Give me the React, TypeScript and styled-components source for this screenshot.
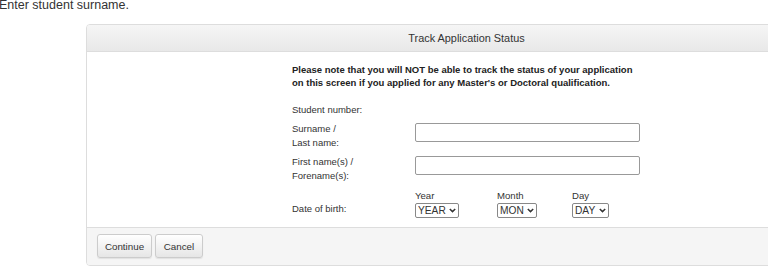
import React from "react";
import styled, { createGlobalStyle } from "styled-components";

const Global = createGlobalStyle`
  html, body { margin: 0; padding: 0; background: #fff; overflow: hidden; }
  body { font-family: "Liberation Sans", Arial, sans-serif; font-size: 9.4px; color: #333; }
`;

const Page = styled.div`
  width: 768px;
  height: 268px;
  overflow: hidden;
`;

const Hint = styled.div`
  margin: -2px 0 0 -1px;
  line-height: 14px;
  font-size: 12.5px;
  color: #333;
`;

const Panel = styled.div`
  margin: 12px 0 0 86px;
  width: 759px;
  border: 1px solid #ddd;
  border-radius: 4px;
  background: #fff;
  overflow: hidden;
`;

const Header = styled.div`
  height: 26px;
  display: flex;
  align-items: center;
  justify-content: center;
  background: linear-gradient(#f5f5f5, #e8e8e8);
  border-bottom: 1px solid #ddd;
  color: #333;
  font-size: 10.9px;
`;

const Body = styled.div`
  height: 175px;
  padding: 11px 0 0 205px;
  box-sizing: border-box;
`;

const Note = styled.p`
  margin: 0 0 14px;
  font-weight: bold;
  font-size: 9.5px;
  line-height: 13px;
  color: #222;
`;

const Row = styled.div<{ $mt?: number; $align?: string }>`
  display: grid;
  grid-template-columns: 123px auto;
  align-items: ${(p) => p.$align || "start"};
  margin-top: ${(p) => p.$mt ?? 0}px;
`;

const Label = styled.div<{ $mb?: number }>`
  line-height: 14px;
  font-size: 9.5px;
  color: #333;
  margin-bottom: ${(p) => p.$mb ?? 0}px;
`;

const TextInput = styled.input`
  box-sizing: border-box;
  width: 225px;
  height: 19px;
  margin-top: 1px;
  border: 1px solid #999;
  border-radius: 2px;
  padding: 0 4px;
  font: inherit;
`;

const DateGroups = styled.div`
  display: flex;
`;

const DateGroup = styled.div<{ $w: number }>`
  width: ${(p) => p.$w}px;
  display: flex;
  flex-direction: column;
  align-items: flex-start;
`;

const SmallLabel = styled.div`
  line-height: 14px;
  font-size: 9.6px;
  color: #333;
`;

const SelectBox = styled.div`
  box-sizing: border-box;
  height: 15px;
  display: flex;
  align-items: center;
  border: 1px solid #888;
  border-radius: 2px;
  padding: 0 2px 0 2px;
  gap: 3px;
  background: #fff;
`;

const Select = styled.select`
  appearance: none;
  border: none;
  background: transparent;
  padding: 0;
  margin: 0;
  font-family: "Liberation Sans", Arial, sans-serif;
  font-size: 10.2px;
  color: #333;
  line-height: 13px;
  outline: none;
`;

const Footer = styled.div`
  height: 38px;
  box-sizing: border-box;
  background: #f5f5f5;
  border-top: 1px solid #ddd;
  display: flex;
  align-items: flex-start;
  gap: 3px;
  padding: 6px 0 0 10px;
`;

const Button = styled.button<{ $w: number }>`
  box-sizing: border-box;
  width: ${(p) => p.$w}px;
  height: 24px;
  border: 1px solid #ccc;
  border-radius: 3px;
  background: linear-gradient(#fff, #e6e6e6);
  box-shadow: 0 1px 1px rgba(0, 0, 0, 0.08);
  font-family: "Liberation Sans", Arial, sans-serif;
  font-size: 9.8px;
  color: #333;
  padding: 0;
`;

const Chevron = () => (
  <svg width="7" height="5" viewBox="0 0 7 5">
    <path d="M0.8 1 L3.5 3.6 L6.2 1" fill="none" stroke="#333" strokeWidth="1.5" />
  </svg>
);

const DateSelect = ({ label, value, w }: { label: string; value: string; w: number }) => (
  <DateGroup $w={w}>
    <SmallLabel>{label}</SmallLabel>
    <SelectBox>
      <Select defaultValue={value}>
        <option>{value}</option>
      </Select>
      <Chevron />
    </SelectBox>
  </DateGroup>
);

export default function App() {
  return (
    <Page>
      <Global />
      <Hint>Enter student surname.</Hint>
      <Panel>
        <Header>Track Application Status</Header>
        <Body>
          <Note>
            Please note that you will NOT be able to track the status of your application
            <br />
            on this screen if you applied for any Master's or Doctoral qualification.
          </Note>
          <Row>
            <Label>Student number:</Label>
          </Row>
          <Row $mt={5}>
            <Label>
              Surname /
              <br />
              Last name:
            </Label>
            <TextInput type="text" />
          </Row>
          <Row $mt={5}>
            <Label>
              First name(s) /
              <br />
              Forename(s):
            </Label>
            <TextInput type="text" />
          </Row>
          <Row $mt={6} $align="end">
            <Label $mb={2}>Date of birth:</Label>
            <DateGroups>
              <DateSelect label="Year" value="YEAR" w={82} />
              <DateSelect label="Month" value="MON" w={75} />
              <DateSelect label="Day" value="DAY" w={60} />
            </DateGroups>
          </Row>
        </Body>
        <Footer>
          <Button $w={55}>Continue</Button>
          <Button $w={48}>Cancel</Button>
        </Footer>
      </Panel>
    </Page>
  );
}
